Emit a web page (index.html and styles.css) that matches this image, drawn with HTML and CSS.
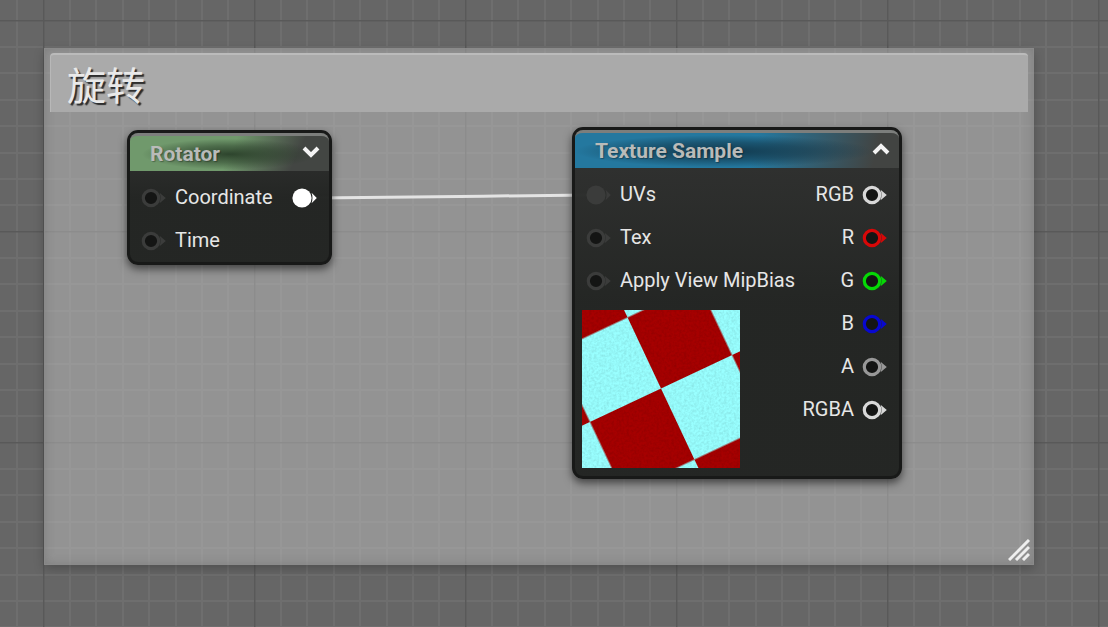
FILE: index.html
```html
<!DOCTYPE html>
<html lang="zh-CN">
<head>
<meta charset="utf-8">
<title>旋转</title>
<link rel="stylesheet" href="styles.css">
</head>
<body>
<svg width="0" height="0" class="defs" aria-hidden="true">
  <symbol id="pin" viewBox="0 0 26 20">
    <circle cx="10" cy="10" r="7.7" fill="#141514" stroke="currentColor" stroke-width="3.2"/>
    <path d="M18.600 4.800 24.800 10l-6.200 5.200c1.200-3.400 1.200-7 0-10.400z" fill="currentColor"/>
  </symbol>
  <symbol id="pin-on" viewBox="0 0 26 20">
    <circle cx="10" cy="10" r="9.600" fill="currentColor"/>
    <path d="M19.600 4.800 24.800 10l-5.200 5.200c1.200-3.400 1.200-7 0-10.400z" fill="currentColor"/>
  </symbol>
</svg>

<main class="canvas">
  <svg class="grid" aria-hidden="true">
    <defs>
      <pattern id="lines" x="43" y="20" width="211" height="211" patternUnits="userSpaceOnUse">
        <path class="minor" d="M27 0v211M53 0v211M80 0v211M106 0v211M133 0v211M159 0v211M185 0v211M0 27h211M0 53h211M0 80h211M0 106h211M0 133h211M0 159h211M0 185h211"/>
        <path class="major" d="M.5 0v211M0 .5h211"/>
      </pattern>
    </defs>
    <rect width="100%" height="100%" fill="url(#lines)"/>
  </svg>

  <section class="comment">
    <h1 class="comment-title">旋转</h1>
    <svg class="grip" width="22" height="22" viewBox="0 0 22 22" aria-hidden="true">
      <path d="M1 21 21 1M8 21 21 8M15 21l6-6"/>
    </svg>
  </section>

  <svg class="wire" aria-hidden="true"><path d="M316 198C400 197 500 196 590 195"/></svg>

  <article class="node rotator">
    <header class="node-head green">
      <h2 class="node-title">Rotator</h2>
      <button class="toggle" type="button" aria-label="Expand"><svg width="18" height="12" viewBox="0 0 18 12"><path d="M2 2l7 7 7-7"/></svg></button>
    </header>
    <div class="node-body">
      <ul class="pins">
        <li class="pin"><svg class="dot idle"><use href="#pin"/></svg><span class="label">Coordinate</span></li>
        <li class="pin"><svg class="dot idle"><use href="#pin"/></svg><span class="label">Time</span></li>
      </ul>
      <ul class="pins out">
        <li class="pin"><svg class="dot white"><use href="#pin-on"/></svg></li>
      </ul>
    </div>
  </article>

  <article class="node sample">
    <header class="node-head blue">
      <h2 class="node-title">Texture Sample</h2>
      <button class="toggle" type="button" aria-label="Collapse"><svg width="18" height="12" viewBox="0 0 18 12"><path d="M2 10l7-7 7 7"/></svg></button>
    </header>
    <div class="node-body">
      <div class="inputs">
        <ul class="pins">
          <li class="pin"><svg class="dot idle"><use href="#pin-on"/></svg><span class="label">UVs</span></li>
          <li class="pin"><svg class="dot idle"><use href="#pin"/></svg><span class="label">Tex</span></li>
          <li class="pin"><svg class="dot idle"><use href="#pin"/></svg><span class="label">Apply View MipBias</span></li>
        </ul>
        <svg class="preview" width="158" height="158" viewBox="0 0 158 158" role="img" aria-label="Texture preview">
          <defs>
            <pattern id="checker" width="157" height="157" patternUnits="userSpaceOnUse" patternTransform="translate(79 78.500) rotate(-25.200)">
              <rect width="157" height="157" fill="#9ff"/>
              <path d="M78.500 0H157V78.500H78.500zM0 78.500H78.500V157H0z" fill="#a60000"/>
            </pattern>
            <filter id="grain" x="0" y="0" width="100%" height="100%">
              <feTurbulence type="fractalNoise" baseFrequency=".4" numOctaves="2" seed="4"/>
              <feColorMatrix type="matrix" values="0 0 0 0 0  0 0 0 0 0  0 0 0 0 0  .9 0 0 0 -.3"/>
            </filter>
          </defs>
          <rect width="158" height="158" fill="url(#checker)"/>
          <rect width="158" height="158" filter="url(#grain)" opacity=".2"/>
        </svg>
      </div>
      <ul class="pins out">
        <li class="pin"><span class="label">RGB</span><svg class="dot light"><use href="#pin"/></svg></li>
        <li class="pin"><span class="label">R</span><svg class="dot red"><use href="#pin"/></svg></li>
        <li class="pin"><span class="label">G</span><svg class="dot lime"><use href="#pin"/></svg></li>
        <li class="pin"><span class="label">B</span><svg class="dot navy"><use href="#pin"/></svg></li>
        <li class="pin"><span class="label">A</span><svg class="dot gray"><use href="#pin"/></svg></li>
        <li class="pin"><span class="label">RGBA</span><svg class="dot light"><use href="#pin"/></svg></li>
      </ul>
    </div>
  </article>
</main>
</body>
</html>
```
FILE: styles.css
```css
* { box-sizing: border-box; }

body {
  margin: 0;
  font-family: Roboto, "Noto Sans CJK SC", sans-serif;
}

h1, h2, ul { margin: 0; padding: 0; }
ul { list-style: none; }
.defs { position: absolute; }

.canvas {
  position: relative;
  min-height: 100vh;
  overflow: hidden;
  background: #666;
}

.grid, .wire {
  position: absolute;
  inset: 0;
  width: 100%;
  height: 100%;
}
.minor { stroke: #6e6e6e; stroke-width: 2; }
.major { stroke: #595959; stroke-width: 2; }

.comment {
  position: absolute;
  inset: 48px 74px 62px 44px;
  padding: 4px 5px;
  background: rgba(192, 192, 192, 0.5);
  border: 1px solid rgba(130, 130, 130, 0.5);
  box-shadow: 0 4px 10px rgba(0, 0, 0, 0.22), inset 0 0 10px rgba(90, 90, 90, 0.35);
}
.comment-title {
  height: 59px;
  padding-left: 16px;
  border-top: 2px solid #bbb;
  border-left: 1px solid #b8b8b8;
  border-radius: 4px 4px 0 0;
  background: #aaa;
  color: #e9e9e9;
  font: 400 39px/56px "Noto Sans CJK SC", sans-serif;
  text-shadow: 2px 2px 1px #2c2c2c;
}
.grip {
  position: absolute;
  right: 3px;
  bottom: 3px;
  fill: none;
  stroke: #eee;
  stroke-width: 3;
}

.wire { fill: none; stroke: #e4e4e4; stroke-width: 3; }

.node {
  position: absolute;
  border: 3px solid #181918;
  border-radius: 11px;
  background: linear-gradient(rgba(48, 49, 48, 0.98), rgba(34, 36, 34, 0.98) 50%);
  box-shadow: 0 4px 8px rgba(0, 0, 0, 0.55);
  color: #e6e6e6;
  font-size: 20px;
}
.rotator { left: 127px; top: 130px; width: 205px; }
.sample { left: 572px; top: 127px; width: 330px; }

.node-head {
  display: flex;
  align-items: center;
  justify-content: space-between;
  height: 38px;
  padding: 0 9px 0 20px;
  border-top: 3px solid #7c7e7c;
  border-radius: 8px 8px 0 0;
}
.green {
  background:
    radial-gradient(ellipse 44% 44% at 50% 52%, rgba(34, 54, 34, 0.85), rgba(34, 54, 34, 0.45) 55%, transparent),
    linear-gradient(115deg, #70996c 50%, #434643 82%);
}
.blue {
  background:
    radial-gradient(ellipse 46% 46% at 46% 52%, rgba(16, 50, 68, 0.9), rgba(16, 50, 68, 0.5) 55%, transparent),
    linear-gradient(105deg, #24789f 55%, #424442 92%);
}
.node-title {
  color: #b9bbb9;
  font-size: 21px;
  font-weight: 700;
  line-height: 24px;
  text-shadow: 1px 1px 1px rgba(0, 0, 0, 0.3);
}
.toggle {
  display: flex;
  padding: 0 0 4px;
  border: 0;
  background: none;
}
.toggle svg { fill: none; stroke: #f4f4f4; stroke-width: 4; }

.node-body {
  display: flex;
  justify-content: space-between;
  padding: 5px 11px 0;
}
.sample .node-body { padding-bottom: 8px; }

.pin {
  display: flex;
  align-items: center;
  gap: 8px;
  height: 43px;
  white-space: nowrap;
}
.label { padding-bottom: 2px; }
.out .pin { justify-content: flex-end; }
.dot { width: 26px; height: 20px; }
.idle { color: #3b3c3b; }
.white { color: #fff; }
.light { color: #d8d8d8; }
.red { color: #d80808; }
.lime { color: #06d806; }
.navy { color: #0808d0; }
.gray { color: #989898; }
.preview { display: block; margin: 8px 0 0 -4px; }
```
